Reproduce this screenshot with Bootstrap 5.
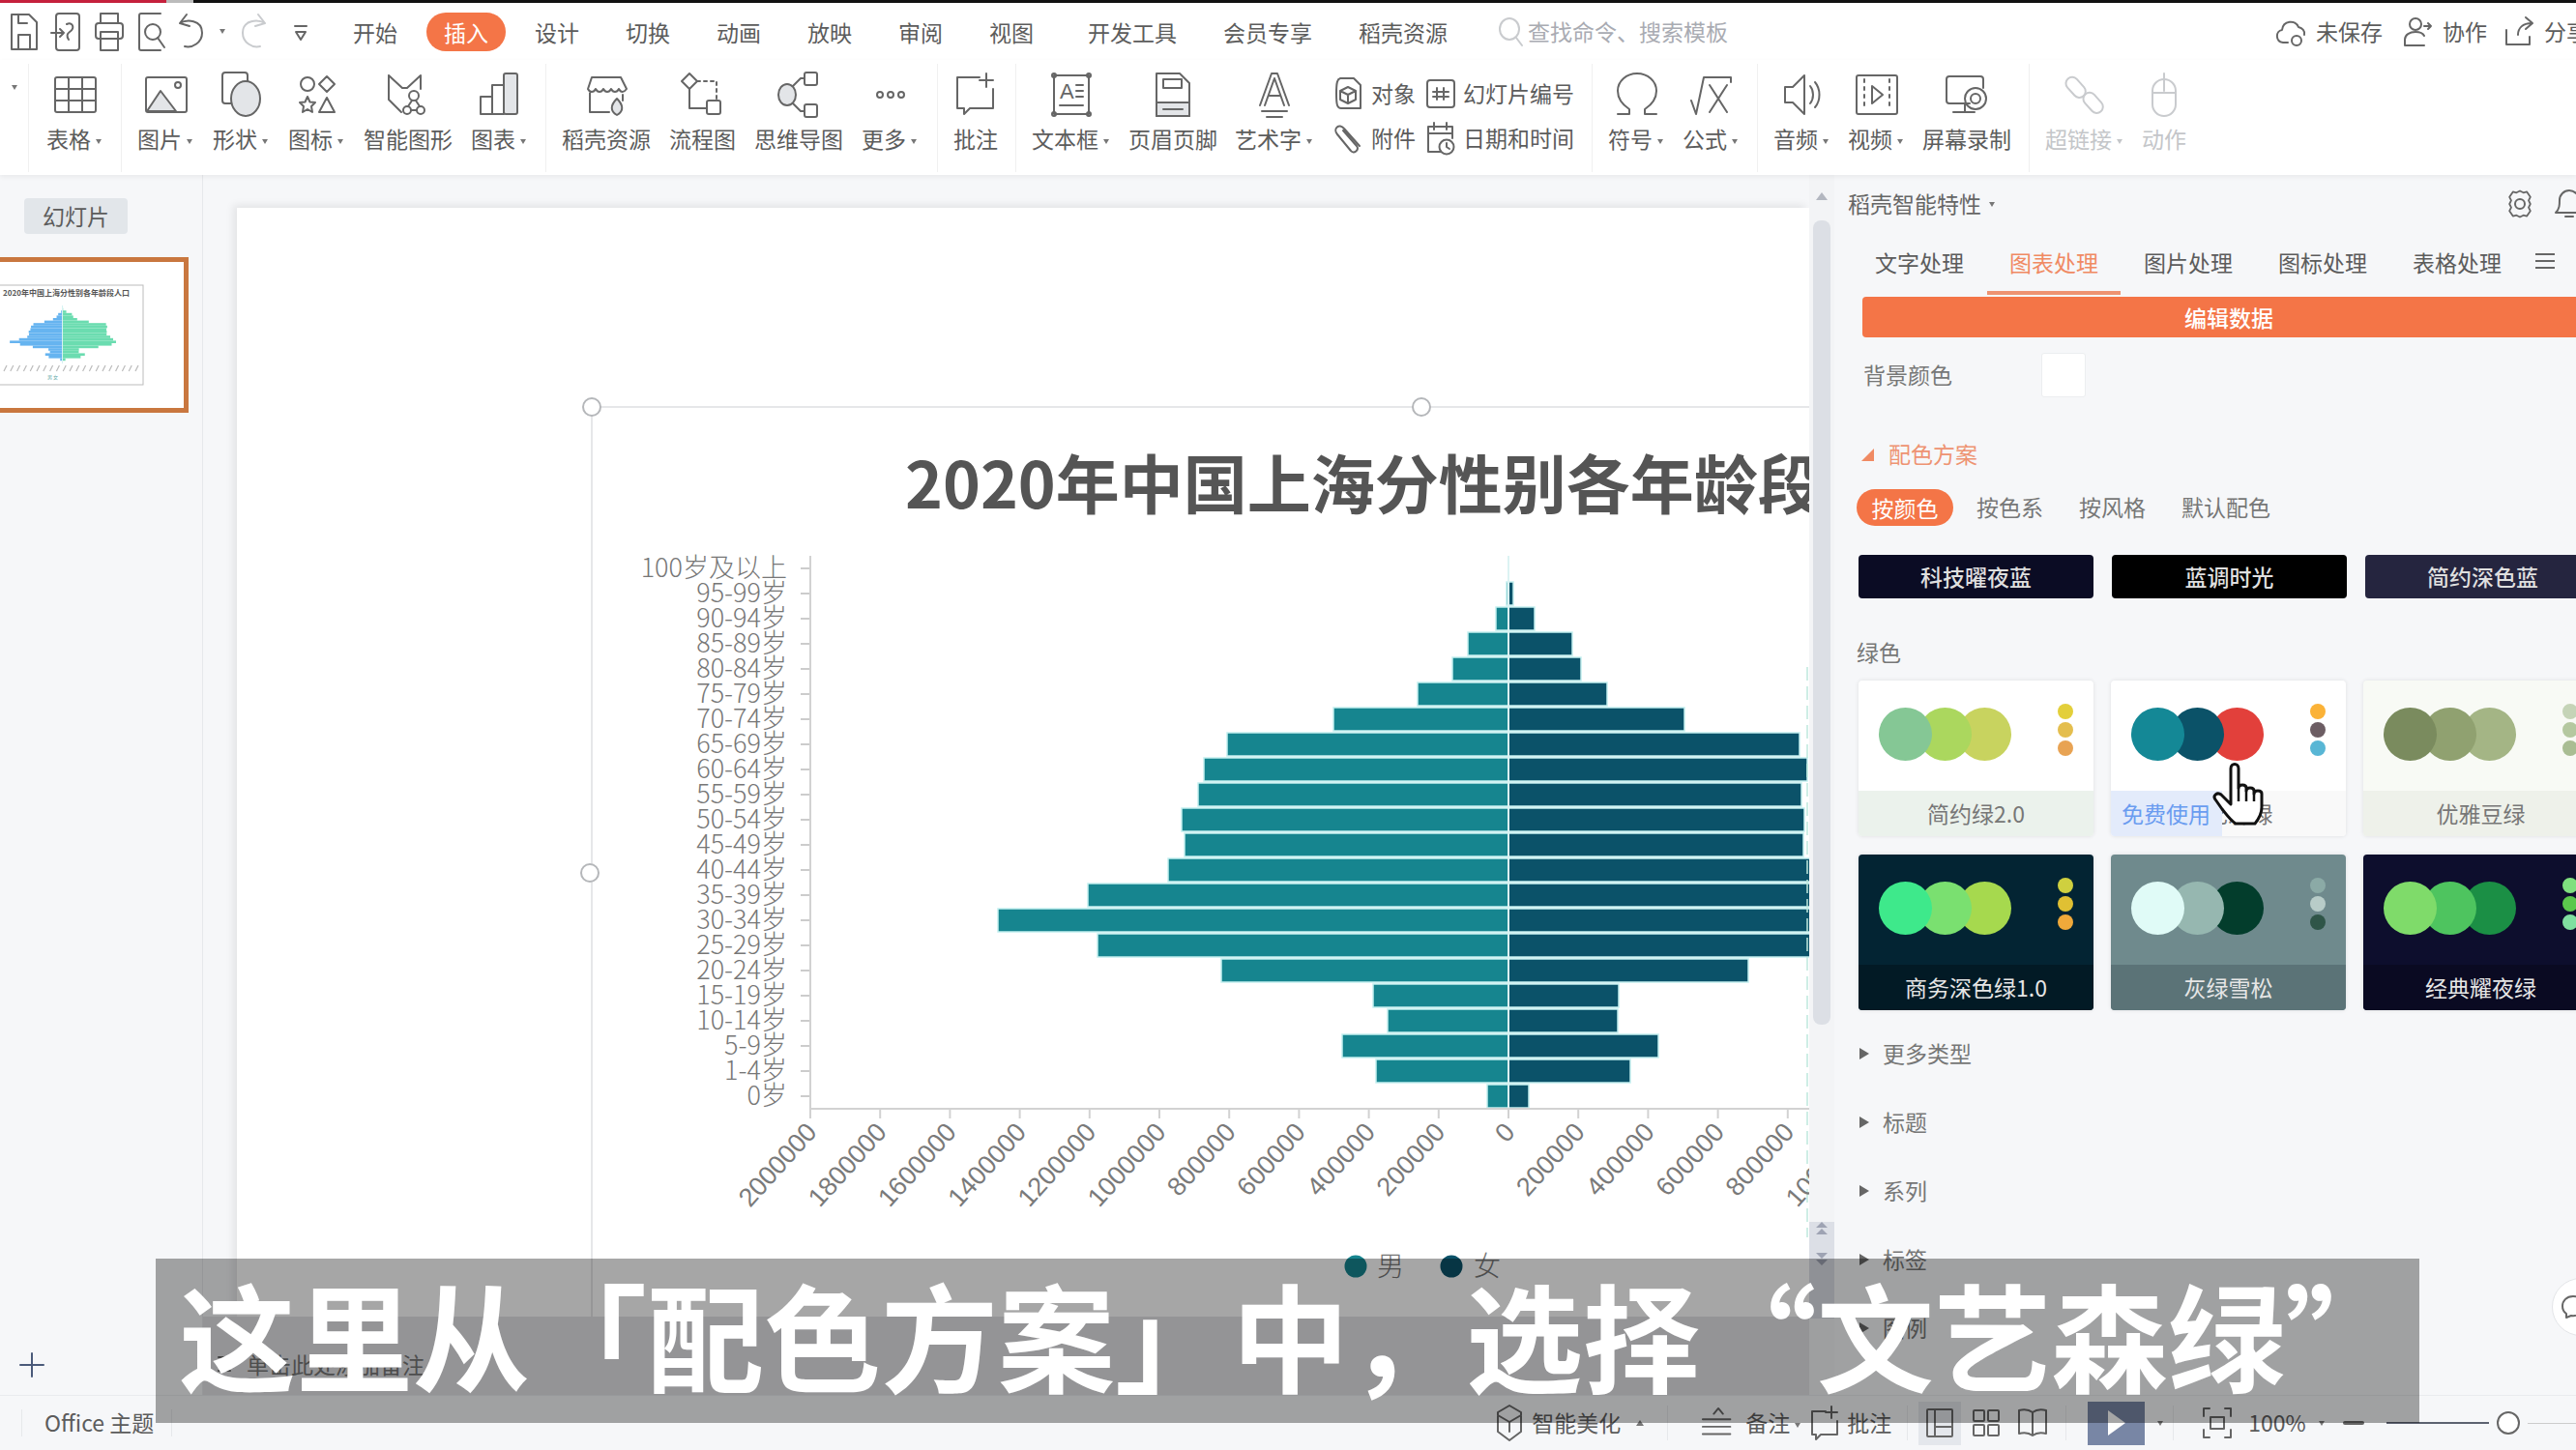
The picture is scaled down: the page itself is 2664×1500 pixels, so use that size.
<!DOCTYPE html>
<html lang="zh-CN">
<head>
  <meta charset="UTF-8" />
  <title>WPS 演示 - 插入图表</title>
  <link href="https://cdn.jsdelivr.net/npm/bootstrap@5.3.0/dist/css/bootstrap.min.css" rel="stylesheet" />
  <style>
    html, body { margin: 0; background: #f6f7f9; }
    body { font-family: "Noto Sans CJK SC", "Noto Sans", sans-serif; color: #5c5c5c; font-size: 23px; line-height: 1.2; }
    .app { width: 2664px; height: 1500px; overflow: hidden; }
    svg { display: block; flex: none; }
    .ic { fill: none; stroke: #666; stroke-width: 2; stroke-linecap: round; stroke-linejoin: round; }
    .ic.pale { stroke: #c9cbce; }
    .ic .gf { fill: #e3e5e8; }
    .ic text { fill: #666; stroke: none; font-family: "Liberation Sans", sans-serif; }

    .strip { height: 3px; background: #111; }
    .strip-red { width: 172px; background: #c5203c; }
    .strip-gap { width: 28px; background: #bbb; }
    .strip-rest { flex: 1; }

    .tabrow { height: 59px; background: #fff; padding-left: 7px; white-space: nowrap; }
    .qat { gap: 8px; }
    .qat-sep { width: 1px; height: 44px; background: #e8e8e8; margin: 0 14px 0 12px; }
    .tiny-crt { display: inline-block; border: 3.5px solid transparent; border-top: 5px solid #777; border-bottom: 0; margin: 0 2px 0 5px; vertical-align: middle; }
    .tiny-up { display: inline-block; border: 4px solid transparent; border-bottom: 6px solid #777; border-top: 0; vertical-align: middle; }
    .rib-tab { padding: 0 18px; height: 40px; line-height: 40px; margin-right: 12px; border-radius: 20px; color: #5c5c5c; }
    .rib-tab.on { background: #f47547; color: #fff; }
    .rib-tab.wide { margin-left: 8px; }
    .find { color: #a9abb2; margin-left: 20px; gap: 3px; }
    .topright { margin-left: 565px; gap: 9px; }
    .topright .gap-save { margin-right: 10px; }
    .topright .gap-team { margin-right: 7px; }

    .ribbon { height: 119px; background: #fff; padding-top: 12px; white-space: nowrap; box-shadow: 0 2px 5px rgba(0,0,0,.06); position: relative; z-index: 2; }
    .rb-lead { width: 29px; text-align: center; }
    .rb-sep { width: 1px; height: 112px; margin: -8px 16px 0 18px; background: #f0f0f0; }
    .rb-sep.first { margin: -8px 18px 0 0; }
    .rb-sep.wide { margin-left: 19px; }
    .rb-group { gap: 18px; }
    .rb-group.roomy { gap: 19px; }
    .rb-item { min-width: 46px; text-align: center; }
    .rb-lab { margin-top: 7px; height: 28px; line-height: 28px; }
    .rb-item.off .rb-lab { color: #c4c6c9; }
    .rb-item.off .tiny-crt { border-top-color: #c4c6c9; }
    .rb-col-a { margin-left: 21px; }
    .rb-col-b { margin-left: 11px; }
    .rb-mini { height: 46px; gap: 8px; }

    .workarea { height: 1262px; }
    .thumbs { width: 210px; border-right: 1px solid #e6e8eb; }
    .thumb-tag { width: 107px; height: 37px; line-height: 37px; margin: 24px 0 24px 25px; background: #e2e6ea; border-radius: 4px; text-align: center; }
    .thumb-box { width: 195px; height: 161px; border: 5px solid #c9773f; border-left: 0; background: #fff; }
    .thumb-add { margin: auto 0 18px 20px; }

    .canvas-col { width: 1661px; }
    .stage { padding: 34px 0 0 35px; height: 1181px; }
    .slide { height: 1147px; background: #fff; box-shadow: -4px -3px 8px rgba(0,0,0,.08); overflow: hidden; }
    .chart { margin: 195px 0 0 355px; }
    .notes { height: 81px; background: #e3e4e7; padding: 36px 0 0 13px; gap: 8px; color: #777; }

    .vscroll { width: 26px; background: #f3f4f6; }
    .v-arrow { height: 47px; padding-top: 18px; }
    .v-thumb { width: 18px; height: 832px; background: #dcdfe5; border-radius: 8px; margin: 0 auto 204px; }
    .v-low { gap: 18px; height: 100px; background: #dcdfe6; padding-top: 0; }

    .panel { width: 767px; overflow: hidden; }
    .panel-in { width: 800px; }
    .p-head { height: 60px; padding-left: 14px; gap: 8px; color: #666; }
    .p-head .gear { margin-left: 518px; }
    .p-head .bell { margin-left: 9px; }
    .smart-tabs { height: 64px; padding: 9px 0 0 19px; gap: 1px; }
    .smart-tabs span { width: 138px; height: 55px; padding-top: 8px; text-align: center; }
    .smart-tabs .on { color: #f08a63; border-bottom: 4px solid #ee9372; }
    .smart-tabs svg { margin: 10px 0 0 11px; }
    .btn-data { width: 758px; height: 42px; margin: 2px 0 0 29px; padding: 0; background: #f47547; color: #fff; border: 0; border-radius: 4px; font-size: 23px; font-weight: 500; }
    .bg-pick { margin: 16px 0 0 30px; height: 46px; }
    .bg-pick span { width: 184px; color: #777; }
    .swatch { width: 46px; height: 46px; background: #fff; border: 1px solid #eceef0; border-radius: 3px; }
    .sec-title { margin: 44px 0 0 28px; height: 30px; gap: 15px; color: #ee9372; }
    .sec-title i { width: 0; height: 0; border-bottom: 13px solid #f08a63; border-left: 13px solid transparent; }
    .pills { margin: 21px 0 0 23px; height: 38px; }
    .pills span { margin-right: 37px; color: #777; }
    .pills .pill-on { width: 100px; line-height: 38px; margin-right: 24px; background: #f47547; color: #fff; border-radius: 19px; text-align: center; }
    .dark-row { margin: 30px 0 0 25px; gap: 19px; }
    .dark-row span { width: 243px; height: 45px; line-height: 45px; text-align: center; border-radius: 4px; color: #dfdfdf; font-weight: 500; }
    .dk-1 { background: #0b0c24; } .dk-2 { background: #000; } .dk-3 { background: #25253f; }
    .sub-title { margin: 40px 0 15px 23px; height: 30px; line-height: 30px; color: #777; }
    .pal-row { margin: 0 0 19px 25px; gap: 18px; }
    .pal { width: 243px; height: 161px; flex: none; border: 0; border-radius: 4px; overflow: hidden; background: var(--bg); box-shadow: 0 0 4px rgba(0,0,0,.10); }
    .pal-top { height: 114px; padding: 28px 0 0 21px; }
    .pal-c { width: 55px; height: 55px; border-radius: 50%; margin-right: -14px; position: relative; }
    .pal-c.a { background: var(--c1); z-index: 3; } .pal-c.b { background: var(--c2); z-index: 2; } .pal-c.c { background: var(--c3); z-index: 1; }
    .pal-d { margin: -4px 0 0 62px; gap: 3px; }
    .pal-d i { width: 16px; height: 16px; border-radius: 50%; }
    .pal-d .a { background: var(--d1); } .pal-d .b { background: var(--d2); } .pal-d .c { background: var(--d3); }
    .pal-ft { height: 47px; line-height: 47px; text-align: center; background: var(--ft); color: var(--tx); position: relative; }
    .free { position: absolute; left: 0; top: 0; width: 115px; height: 47px; padding-left: 11px; text-align: left; background: #e3ebfb; color: #6a9cf0; }
    .pal-1 { --bg:#fff; --ft:#ebf2ec; --tx:#777; --c1:#85c795; --c2:#abd75e; --c3:#c8d35f; --d1:#e3cf3a; --d2:#e4be4e; --d3:#e8a353; }
    .pal-2 { --bg:#fff; --ft:#f9f9f9; --tx:#777; --c1:#148896; --c2:#0b5268; --c3:#e2403b; --d1:#fbb237; --d2:#6c5d63; --d3:#58b6d5; }
    .pal-3 { --bg:#f8faf5; --ft:#eef1ea; --tx:#777; --c1:#7a8b5e; --c2:#90a170; --c3:#a4b585; --d1:#c5d4b7; --d2:#b5c8a0; --d3:#a9bd93; }
    .pal-4 { --bg:#032433; --ft:#021a25; --tx:#e6e6e6; --c1:#3ee98b; --c2:#7ae070; --c3:#a6d94e; --d1:#cfd03f; --d2:#e0c033; --d3:#f0a93a; }
    .pal-5 { --bg:#6f8a8d; --ft:#5b7377; --tx:#e6e6e6; --c1:#e0fbf7; --c2:#96b7b0; --c3:#033d2c; --d1:#8baaa6; --d2:#b8ccc8; --d3:#2f5548; }
    .pal-6 { --bg:#0d0e2d; --ft:#0a0a22; --tx:#e6e6e6; --c1:#7fdb6a; --c2:#4ec45f; --c3:#1b8f45; --d1:#7fe07f; --d2:#5cc84d; --d3:#80e0a0; }
    .acc-list { margin-top: -10px; }
    .acc-row { height: 71px; padding-left: 26px; gap: 14px; color: #777; }
    .acc-row i { width: 0; height: 0; border-left: 10px solid #666; border-top: 6px solid transparent; border-bottom: 6px solid transparent; }

    .statusbar { height: 57px; border-top: 1px solid #e9ebee; background: #f6f7f9; white-space: nowrap; }
    .st-sep { width: 1px; height: 36px; background: #e6e8eb; }
    .st-theme { margin: 0 0 0 22px; padding: 0 18px 0 23px; width: 161px; border-left: 1px solid #e6e8eb; border-right: 1px solid #e6e8eb; }
    .st-mid { margin-left: 1368px; gap: 8px; }
    .st-gap-a { margin-right: 26px; }
    .st-gap-b { margin-right: 3px; }
    .st-gap-c { margin-right: 14px; }
    .st-fit { margin-left: 21px; }
    .st-view { width: 44px; height: 45px; }
    .st-view.on { background: #e4e7ec; }
    .st-play { width: 59px; height: 45px; background: #7886a5; }
    .st-slide { width: 106px; height: 2px; background: #5c6270; margin-left: 6px; }
    .st-knob { width: 24px; height: 24px; border-radius: 50%; background: #fff; border: 2px solid #666; }
    .st-rest { width: 60px; height: 1px; background: #ccc; }

    .subtitle-bar { left: 161px; top: 1302px; width: 2341px; height: 170px; padding: 0 0 18px 24px; background: rgba(0,0,0,.35); color: #fff; font-size: 121px; line-height: 1; font-weight: 700; white-space: nowrap; z-index: 5; }
    .hand { left: 2288px; top: 788px; z-index: 4; }
    .chat-btn { left: 2639px; top: 1322px; width: 60px; height: 60px; background: #fff; border: 1px solid #e3e5e8; border-radius: 50%; z-index: 3; padding: 16px 0 0 8px; }
  </style>
</head>
<body>
<div class="app position-relative">
  <div class="d-flex">
    <div class="strip strip-red"></div>
    <div class="strip strip-gap"></div>
    <div class="strip strip-rest"></div>
  </div>

  <div class="tabrow d-flex align-items-center">
    <div class="qat d-flex align-items-center">
      <svg class="ic" width="36" height="44" viewBox="0 0 36 44"><path d="M5 4h18l8 8v28H5z"/><path d="M12 40V25h12v15M12 4v9h9"/></svg>
      <svg class="ic" width="36" height="44" viewBox="0 0 36 44"><rect x="7" y="3" width="24" height="38" rx="3"/><path d="M2 23h13l-4-4m4 4-4 4M18 14c6-3 9 4 3 8-3 2-3 5-1 8"/></svg>
      <svg class="ic" width="36" height="44" viewBox="0 0 36 44"><path d="M9 13V3h18v10"/><rect x="4" y="13" width="28" height="16" rx="3"/><path d="M9 22v19h18V22z"/></svg>
      <svg class="ic" width="36" height="44" viewBox="0 0 36 44"><path d="M27 3H7a2 2 0 0 0-2 2v34a2 2 0 0 0 2 2h20"/><circle cx="19" cy="22" r="8"/><path d="m24 28 7 10"/></svg>
      <svg class="ic" width="36" height="44" viewBox="0 0 36 44"><path d="m10 4-7 9 10 3M3 13c7-4 23-4 23 10 0 10-10 16-18 14"/></svg>
      <span class="tiny-crt m-0"></span>
      <svg class="ic pale" width="36" height="44" viewBox="0 0 36 44"><path d="m26 4 7 9-10 3M33 13c-7-4-23-4-23 10 0 10 10 16 18 14"/></svg>
      <svg class="ic ms-3" width="20" height="44" viewBox="0 0 20 44"><path d="M4 16h12M5 22h10l-5 8z"/></svg>
    </div>
    <div class="qat-sep"></div>
    <span class="rib-tab">开始</span>
    <span class="rib-tab on">插入</span>
    <span class="rib-tab">设计</span>
    <span class="rib-tab">切换</span>
    <span class="rib-tab">动画</span>
    <span class="rib-tab">放映</span>
    <span class="rib-tab">审阅</span>
    <span class="rib-tab">视图</span>
    <span class="rib-tab wide">开发工具</span>
    <span class="rib-tab">会员专享</span>
    <span class="rib-tab">稻壳资源</span>
    <div class="find d-flex align-items-center">
      <svg class="ic pale" width="30" height="34" viewBox="0 0 30 34"><ellipse cx="14" cy="14" rx="10" ry="11"/><path d="m21 23 6 8"/></svg>
      查找命令、搜索模板
    </div>
    <div class="topright d-flex align-items-center">
      <svg class="ic" width="34" height="34" viewBox="0 0 34 34"><path d="M14 28H9C1 27 1 16 8 15 9 5 22 4 25 12c4 1 7 4 6 8"/><circle cx="23" cy="26" r="5"/></svg>
      <span class="gap-save">未保存</span>
      <svg class="ic" width="34" height="34" viewBox="0 0 34 34"><circle cx="15" cy="9" r="6"/><path d="M4 31v-6c0-5 5-8 11-8s8 2 9 4M4 31h20M24 11h7m-3-3 3 3-3 3"/></svg>
      <span class="gap-team">协作</span>
      <svg class="ic" width="34" height="34" viewBox="0 0 34 34"><path d="M4 15v15h24v-8M16 20c0-7 5-12 14-12M24 2l7 6-7 6"/></svg>
      <span>分享</span>
    </div>
  </div>

  <div class="ribbon d-flex">
    <div class="rb-lead"><span class="tiny-crt m-0"></span></div>
    <div class="rb-sep first"></div>
    <div class="rb-item">
      <svg class="ic mx-auto" width="46" height="48" viewBox="0 0 46 48"><rect x="2" y="6" width="42" height="36" rx="2"/><path d="M16 6v36M30 6v36M2 18h42M2 30h42"/></svg>
      <div class="rb-lab">表格<span class="tiny-crt"></span></div>
    </div>
    <div class="rb-sep"></div>
    <div class="rb-group roomy d-flex">
      <div class="rb-item">
        <svg class="ic mx-auto" width="46" height="48" viewBox="0 0 46 48"><rect x="2" y="6" width="42" height="36" rx="2"/><path class="gf" d="M3 41 17 20l16 21z"/><circle cx="35" cy="14" r="3"/></svg>
        <div class="rb-lab">图片<span class="tiny-crt"></span></div>
      </div>
      <div class="rb-item">
        <svg class="ic mx-auto" width="46" height="48" viewBox="0 0 46 48"><rect x="3" y="1" width="26" height="32" rx="3"/><ellipse class="gf" cx="27" cy="28" rx="15" ry="18"/></svg>
        <div class="rb-lab">形状<span class="tiny-crt"></span></div>
      </div>
      <div class="rb-item">
        <svg class="ic mx-auto" width="46" height="48" viewBox="0 0 46 48"><circle cx="13" cy="13" r="7"/><path d="m33 5 8 8-8 8-8-8zM13 26l2.5 5.500 5.500.5-4 4 1 6-5-3-5 3 1-6-4-4 5.500-.5zM33 27l8 15H25z"/></svg>
        <div class="rb-lab">图标<span class="tiny-crt"></span></div>
      </div>
      <div class="rb-item">
        <svg class="ic mx-auto" width="46" height="48" viewBox="0 0 46 48"><path d="M3 4v25l13 13M3 4l14 13h5L36 4v14"/><circle cx="29" cy="25" r="5"/><circle cx="22" cy="40" r="4"/><circle cx="36" cy="40" r="4"/><path d="m27 30-4 6m8-6 4 6m-9 4h6"/></svg>
        <div class="rb-lab">智能图形</div>
      </div>
      <div class="rb-item">
        <svg class="ic mx-auto" width="46" height="48" viewBox="0 0 46 48"><rect x="3" y="26" width="12" height="18"/><rect x="15" y="14" width="12" height="30"/><rect class="gf" x="27" y="2" width="14" height="42" rx="2"/></svg>
        <div class="rb-lab">图表<span class="tiny-crt"></span></div>
      </div>
    </div>
    <div class="rb-sep"></div>
    <div class="rb-group roomy d-flex">
      <div class="rb-item">
        <svg class="ic mx-auto" width="46" height="48" viewBox="0 0 46 48"><path d="M8 6h30l6 12c-3 4-6 4-8 0-2 4-6 4-8 0-2 4-6 4-8 0-2 4-6 4-8 0-2 4-6 4-8 0zM6 22v20h20M40 24v6"/><path class="gf" d="M34 45c-7-4-7-10 0-17 7 7 7 13 0 17z"/></svg>
        <div class="rb-lab">稻壳资源</div>
      </div>
      <div class="rb-item">
        <svg class="ic mx-auto" width="46" height="48" viewBox="0 0 46 48"><path d="m9 2 8 8-8 8-8-8zM9 18v20h18"/><path stroke-dasharray="3 4" d="M17 10h20v20"/><rect x="27" y="30" width="14" height="14" rx="2"/></svg>
        <div class="rb-lab">流程图</div>
      </div>
      <div class="rb-item">
        <svg class="ic mx-auto" width="46" height="48" viewBox="0 0 46 48"><ellipse class="gf" cx="11" cy="24" rx="9" ry="11"/><path d="m17 15 8-8h4M17 33l8 8h4"/><rect x="29" y="1" width="13" height="13" rx="2"/><rect x="29" y="34" width="13" height="13" rx="2"/></svg>
        <div class="rb-lab">思维导图</div>
      </div>
      <div class="rb-item">
        <svg class="ic mx-auto" width="46" height="48" viewBox="0 0 46 48"><circle cx="12" cy="24" r="3"/><circle cx="23" cy="24" r="3"/><circle cx="34" cy="24" r="3"/></svg>
        <div class="rb-lab">更多<span class="tiny-crt"></span></div>
      </div>
    </div>
    <div class="rb-sep wide"></div>
    <div class="rb-item">
      <svg class="ic mx-auto" width="46" height="48" viewBox="0 0 46 48"><path d="M27 6H4v32h7v6l6-6h24V18M34 2v14M27 9h14"/></svg>
      <div class="rb-lab">批注</div>
    </div>
    <div class="rb-sep"></div>
    <div class="rb-group d-flex">
      <div class="rb-item">
        <svg class="ic mx-auto" width="46" height="48" viewBox="0 0 46 48"><rect x="5" y="4" width="36" height="40"/><circle cx="5" cy="4" r="2"/><circle cx="41" cy="4" r="2"/><circle cx="5" cy="44" r="2"/><circle cx="41" cy="44" r="2"/><text x="11" y="28" font-size="22">A</text><path d="M28 14h7M28 20h7M28 26h7M11 35h24"/></svg>
        <div class="rb-lab">文本框<span class="tiny-crt"></span></div>
      </div>
      <div class="rb-item">
        <svg class="ic mx-auto" width="46" height="48" viewBox="0 0 46 48"><path d="M6 2h24l10 10v34H6z"/><rect x="13" y="8" width="19" height="9"/><path class="gf" d="M6 32h34v14H6z"/><path d="M13 39h20"/></svg>
        <div class="rb-lab">页眉页脚</div>
      </div>
      <div class="rb-item">
        <svg class="ic mx-auto" width="46" height="48" viewBox="0 0 46 48"><path d="M8 35 20 2h6l12 33M13 35l10-28 10 28M17 25h12M10 41h26M15 47h16"/></svg>
        <div class="rb-lab">艺术字<span class="tiny-crt"></span></div>
      </div>
    </div>
    <div class="rb-col-a">
      <div class="rb-mini d-flex align-items-center">
        <svg class="ic" width="30" height="36" viewBox="0 0 30 36"><path d="M6 2h14l7 7v24H7M6 2C3 3 2 6 2 18s1 15 5 15"/><path d="m14 11 8 4v9l-8 4-8-4v-9zM6 15l8 4 8-4M14 19v9"/></svg>
        <span>对象</span>
      </div>
      <div class="rb-mini d-flex align-items-center">
        <svg class="ic" width="30" height="36" viewBox="0 0 30 36"><path d="M26 26 10 8C5 2-2 8 3 14l14 17c3 4 9-1 6-5L9 10"/></svg>
        <span>附件</span>
      </div>
    </div>
    <div class="rb-col-b">
      <div class="rb-mini d-flex align-items-center">
        <svg class="ic" width="30" height="36" viewBox="0 0 30 36"><rect x="1" y="4" width="28" height="28" rx="3"/><path d="M11 12v12M18 12v12M7 16h16M7 21h16"/></svg>
        <span>幻灯片编号</span>
      </div>
      <div class="rb-mini d-flex align-items-center">
        <svg class="ic" width="30" height="36" viewBox="0 0 30 36"><path d="M15 32H2V6h25v12M2 13h25M8 2v7M21 2v7"/><circle cx="21" cy="27" r="7.500"/><path d="M21 23v4l3 2"/></svg>
        <span>日期和时间</span>
      </div>
    </div>
    <div class="rb-sep"></div>
    <div class="rb-group d-flex">
      <div class="rb-item">
        <svg class="ic mx-auto" width="46" height="48" viewBox="0 0 46 48"><path d="M3 44h12v-5C6 33 3 26 3 20a20 18 0 0 1 40 0c0 6-3 13-12 19v5h12"/></svg>
        <div class="rb-lab">符号<span class="tiny-crt"></span></div>
      </div>
      <div class="rb-item">
        <svg class="ic mx-auto" width="46" height="48" viewBox="0 0 46 48"><path d="m2 30 5 14 8-38h28v5M21 14l18 28M39 14 21 42"/></svg>
        <div class="rb-lab">公式<span class="tiny-crt"></span></div>
      </div>
    </div>
    <div class="rb-sep"></div>
    <div class="rb-group d-flex">
      <div class="rb-item">
        <svg class="ic mx-auto" width="46" height="48" viewBox="0 0 46 48"><path d="M5 16h8L25 4v40L13 32H5zM31 15c4 5 4 13 0 18M36 11c6 7 6 19 0 26"/></svg>
        <div class="rb-lab">音频<span class="tiny-crt"></span></div>
      </div>
      <div class="rb-item">
        <svg class="ic mx-auto" width="46" height="48" viewBox="0 0 46 48"><rect x="2" y="4" width="42" height="40" rx="2"/><path stroke-dasharray="3 5" d="M10 8v32M36 8v32"/><path d="m18 15 11 9-11 9z"/></svg>
        <div class="rb-lab">视频<span class="tiny-crt"></span></div>
      </div>
      <div class="rb-item">
        <svg class="ic mx-auto" width="46" height="48" viewBox="0 0 46 48"><path d="M26 33H5a3 3 0 0 1-3-3V8a3 3 0 0 1 3-3h32a3 3 0 0 1 3 3v9M21 33v9M9 42h22"/><circle cx="32" cy="28" r="11"/><circle cx="32" cy="28" r="5"/></svg>
        <div class="rb-lab">屏幕录制</div>
      </div>
    </div>
    <div class="rb-sep"></div>
    <div class="rb-group d-flex">
      <div class="rb-item off">
        <svg class="ic pale mx-auto" width="46" height="48" viewBox="0 0 46 48"><rect x="2" y="10" width="24" height="13" rx="6.500" transform="rotate(48 14 16)"/><rect x="20" y="26" width="24" height="13" rx="6.500" transform="rotate(48 32 32)"/></svg>
        <div class="rb-lab">超链接<span class="tiny-crt"></span></div>
      </div>
      <div class="rb-item off">
        <svg class="ic pale mx-auto" width="46" height="48" viewBox="0 0 46 48"><rect x="11" y="8" width="24" height="38" rx="12"/><path d="M23 2v18M11 22h24"/></svg>
        <div class="rb-lab">动作</div>
      </div>
    </div>
  </div>

  <div class="workarea d-flex">
    <div class="thumbs d-flex flex-column">
      <div class="thumb-tag">幻灯片</div>
      <div class="thumb-box"><svg id="thumbChart" width="190" height="151" viewBox="0 271 190 151"></svg></div>
      <div class="thumb-add">
        <svg class="ic" width="26" height="26" viewBox="0 0 26 26"><path stroke="#4a5a7a" d="M13 1v24M1 13h24"/></svg>
      </div>
    </div>

    <div class="canvas-col d-flex flex-column">
      <div class="stage">
        <div class="slide">
          <svg id="popChart" class="chart" width="1271" height="952" viewBox="600 410 1271 952"></svg>
        </div>
      </div>
      <div class="notes d-flex align-items-start">
        <svg class="ic" width="24" height="28" viewBox="0 0 24 28"><path d="M3 6h18M3 13h18M3 20h12"/></svg>
        单击此处添加备注
      </div>
    </div>

    <div class="vscroll">
      <div class="v-arrow"><svg width="26" height="10" viewBox="0 0 26 10"><path d="m13 0 6 8H7z" fill="#b3b7c0"/></svg></div>
      <div class="v-thumb"></div>
      <div class="v-low d-flex flex-column align-items-center">
        <svg width="26" height="14" viewBox="0 0 26 14"><path d="m13 0 6 6H7zM13 7l6 6H7z" fill="#9ea3b3"/></svg>
        <svg width="26" height="14" viewBox="0 0 26 14"><path d="m7 0h12l-6 6zM7 7h12l-6 6z" fill="#9ea3b3"/></svg>
      </div>
    </div>

    <div class="panel">
      <div class="panel-in">
        <div class="p-head d-flex align-items-center">
          <span>稻壳智能特性</span><span class="tiny-crt m-0"></span>
          <svg class="ic gear" width="34" height="34" viewBox="0 0 34 34"><path d="m17 2 4 2 4-1 4 6-2 4 2 4-2 4 2 4-4 6-4-1-4 2-4-2-4 1-4-6 2-4-2-4 2-4-2-4 4-6 4 1z" transform="matrix(.9 0 0 .9 1.700 1.700)"/><circle cx="17" cy="17" r="5"/></svg>
          <svg class="ic bell" width="34" height="34" viewBox="0 0 34 34"><path d="M3 26c4-4 4-8 4-13a10 10 0 0 1 20 0c0 5 0 9 4 13zM13 30h8"/></svg>
        </div>
        <div class="smart-tabs d-flex">
          <span>文字处理</span>
          <span class="on">图表处理</span>
          <span>图片处理</span>
          <span>图标处理</span>
          <span>表格处理</span>
          <svg class="ic" width="20" height="20" viewBox="0 0 20 20"><path d="M0 3h20M0 10h20M0 17h20"/></svg>
        </div>
        <button type="button" class="btn btn-data">编辑数据</button>
        <div class="bg-pick d-flex align-items-center">
          <span>背景颜色</span>
          <div class="swatch"></div>
        </div>
        <div class="sec-title d-flex align-items-center"><i></i>配色方案</div>
        <div class="pills d-flex align-items-center">
          <span class="pill-on">按颜色</span>
          <span>按色系</span>
          <span>按风格</span>
          <span>默认配色</span>
        </div>
        <div class="dark-row d-flex">
          <span class="dk-1">科技曜夜蓝</span>
          <span class="dk-2">蓝调时光</span>
          <span class="dk-3">简约深色蓝</span>
        </div>
        <div class="sub-title">绿色</div>
        <div class="pal-row d-flex">
          <div class="card pal pal-1">
            <div class="pal-top d-flex"><div class="pal-c a"></div><div class="pal-c b"></div><div class="pal-c c"></div><div class="pal-d d-flex flex-column"><i class="a"></i><i class="b"></i><i class="c"></i></div></div>
            <div class="pal-ft">简约绿2.0</div>
          </div>
          <div class="card pal pal-2">
            <div class="pal-top d-flex"><div class="pal-c a"></div><div class="pal-c b"></div><div class="pal-c c"></div><div class="pal-d d-flex flex-column"><i class="a"></i><i class="b"></i><i class="c"></i></div></div>
            <div class="pal-ft">文艺森绿<span class="free">免费使用</span></div>
          </div>
          <div class="card pal pal-3">
            <div class="pal-top d-flex"><div class="pal-c a"></div><div class="pal-c b"></div><div class="pal-c c"></div><div class="pal-d d-flex flex-column"><i class="a"></i><i class="b"></i><i class="c"></i></div></div>
            <div class="pal-ft">优雅豆绿</div>
          </div>
        </div>
        <div class="pal-row d-flex">
          <div class="card pal pal-4">
            <div class="pal-top d-flex"><div class="pal-c a"></div><div class="pal-c b"></div><div class="pal-c c"></div><div class="pal-d d-flex flex-column"><i class="a"></i><i class="b"></i><i class="c"></i></div></div>
            <div class="pal-ft">商务深色绿1.0</div>
          </div>
          <div class="card pal pal-5">
            <div class="pal-top d-flex"><div class="pal-c a"></div><div class="pal-c b"></div><div class="pal-c c"></div><div class="pal-d d-flex flex-column"><i class="a"></i><i class="b"></i><i class="c"></i></div></div>
            <div class="pal-ft">灰绿雪松</div>
          </div>
          <div class="card pal pal-6">
            <div class="pal-top d-flex"><div class="pal-c a"></div><div class="pal-c b"></div><div class="pal-c c"></div><div class="pal-d d-flex flex-column"><i class="a"></i><i class="b"></i><i class="c"></i></div></div>
            <div class="pal-ft">经典耀夜绿</div>
          </div>
        </div>
        <div class="acc-list">
          <div class="acc-row d-flex align-items-center"><i></i>更多类型</div>
          <div class="acc-row d-flex align-items-center"><i></i>标题</div>
          <div class="acc-row d-flex align-items-center"><i></i>系列</div>
          <div class="acc-row d-flex align-items-center"><i></i>标签</div>
          <div class="acc-row d-flex align-items-center"><i></i>图例</div>
        </div>
      </div>
    </div>
  </div>

  <div class="statusbar d-flex align-items-center">
    <div class="st-theme">Office 主题</div>
    <div class="st-mid d-flex align-items-center">
      <svg class="ic" width="30" height="40" viewBox="0 0 30 40"><path d="M15 2 3 9v20l12 9 12-9V9zM3 12l12 7 12-7M15 19v10"/></svg>
      <span>智能美化</span>
      <span class="tiny-up mx-2"></span>
      <div class="st-sep st-gap-a ms-2"></div>
      <svg class="ic" width="38" height="34" viewBox="0 0 38 34"><path d="M2 14h30M2 22h30M2 30h30M14 8l5-6 5 6" transform="scale(.95)"/></svg>
      <span>备注<span class="tiny-crt"></span></span>
      <svg class="ic" width="30" height="36" viewBox="0 0 30 36"><path d="M16 6H2v24h4v5l5-5h17V16M22 1v12M16 7h12"/></svg>
      <span>批注</span>
      <div class="st-sep st-gap-b ms-2"></div>
      <div class="st-view on d-flex align-items-center justify-content-center"><svg class="ic" width="30" height="32" viewBox="0 0 30 32"><rect x="2" y="2" width="26" height="28" rx="1"/><path d="M10 2v28M10 20h18"/></svg></div>
      <svg class="ic" width="36" height="32" viewBox="0 0 36 32"><rect x="5" y="3" width="11" height="11" rx="1"/><rect x="20" y="3" width="11" height="11" rx="1"/><rect x="5" y="18" width="11" height="11" rx="1"/><rect x="20" y="18" width="11" height="11" rx="1"/></svg>
      <svg class="ic ms-1" width="36" height="34" viewBox="0 0 36 34"><path d="M18 6C14 3 8 3 4 4v24c4-1 10-1 14 2 4-3 10-3 14-2V4c-4-1-10-1-14 2zM18 6v24"/></svg>
      <div class="st-sep st-gap-c ms-2"></div>
      <div class="st-play d-flex align-items-center justify-content-center"><svg width="22" height="30" viewBox="0 0 22 30"><path d="M2 2 20 15 2 28z" fill="#fff"/></svg></div>
      <span class="tiny-crt"></span>
      <div class="st-sep"></div>
      <svg class="ic st-fit" width="32" height="34" viewBox="0 0 32 34"><path d="M8 2H2v8M24 2h6v8M8 32H2v-8M24 32h6v-8"/><rect x="9" y="11" width="14" height="12"/></svg>
      <span class="ms-2">100%</span>
      <span class="tiny-crt"></span>
      <svg class="ic mx-2" width="24" height="6" viewBox="0 0 24 6"><path stroke-width="4" d="M3 3h18"/></svg>
      <div class="st-slide"></div>
      <div class="st-knob"></div>
      <div class="st-rest"></div>
    </div>
  </div>

  <svg class="hand position-absolute" width="56" height="68" viewBox="0 0 56 68">
    <path fill="#fff" stroke="#111" stroke-width="3" stroke-linejoin="round" d="M19 7c0-6 8-6 8 0v20c0-4 8-4 8 0v3c0-4 8-4 8 0v3c0-4 8-4 8 0v14c0 7-3 12-7 17H24c-5-3-10-10-14-15L3 39c-3-4 2-8 6-5l10 10z"/>
    <path stroke="#111" stroke-width="2.500" d="M27 27v14M35 30v11M43 33v8"/>
  </svg>
  <div class="chat-btn position-absolute">
    <svg class="ic" width="26" height="26" viewBox="0 0 26 26"><path d="M13 2C6 2 2 7 2 12c0 3 1 6 4 8v4l5-2c8 1 13-4 13-10S19 2 13 2z"/></svg>
  </div>
  <div class="subtitle-bar position-absolute d-flex align-items-center">这里从「配色方案」中，选择“文艺森绿”</div>
</div>

<script src="https://cdn.jsdelivr.net/npm/bootstrap@5.3.0/dist/js/bootstrap.bundle.min.js"></script>
<script>
  (function () {
    // bar widths read off the picture: [label, male px, female px]
    var rows = [
      ["100岁及以上", 0, 0], ["95-99岁", 2, 5], ["90-94岁", 13, 27], ["85-89岁", 42, 66],
      ["80-84岁", 58, 75], ["75-79岁", 94, 102], ["70-74岁", 181, 182], ["65-69岁", 291, 301],
      ["60-64岁", 315, 309], ["55-59岁", 321, 303], ["50-54岁", 338, 306], ["45-49岁", 335, 305],
      ["40-44岁", 352, 330], ["35-39岁", 435, 350], ["30-34岁", 528, 370], ["25-29岁", 425, 340],
      ["20-24岁", 297, 248], ["15-19岁", 140, 114], ["10-14岁", 125, 113], ["5-9岁", 172, 155],
      ["1-4岁", 137, 126], ["0岁", 22, 21]
    ];
    var zeroX = 1560, chartTop = 575, band = 26, step = 72.2;
    var h = "";
    // selection frame
    h += '<path d="M612 421H1871M612 421V1362" stroke="#e6e7e9" stroke-width="2" fill="none"/>';
    [[612, 421], [1470, 421], [610, 903]].forEach(function (p) {
      h += '<circle cx="' + p[0] + '" cy="' + p[1] + '" r="9" fill="#fff" stroke="#b5b7ba" stroke-width="2"/>';
    });
    h += '<text x="936" y="526" font-size="66" font-weight="700" fill="#555" font-family="Noto Sans CJK SC, sans-serif">2020年中国上海分性别各年龄段人口金字塔</text>';
    rows.forEach(function (r, i) {
      var y = chartTop + i * band;
      h += '<text x="814" y="' + (y + 22) + '" text-anchor="end" font-size="27" font-weight="300" fill="#777" font-family="Noto Sans CJK SC, sans-serif">' + r[0] + '</text>';
      h += '<path d="M828 ' + (y + 13) + 'h10" stroke="#ccc" stroke-width="2"/>';
      if (r[1]) h += '<rect x="' + (zeroX - r[1]) + '" y="' + (y + 1) + '" width="' + r[1] + '" height="24" fill="#16858f" stroke="#c4efef" stroke-width="1.5"/>';
      if (r[2]) h += '<rect x="' + zeroX + '" y="' + (y + 1) + '" width="' + r[2] + '" height="24" fill="#0b5269" stroke="#c4efef" stroke-width="1.5"/>';
    });
    h += '<path d="M' + zeroX + ' 575V1147" stroke="#dcf3f3" stroke-width="2"/>';
    h += '<path d="M838 575V1147H1871" stroke="#d2d2d2" stroke-width="2" fill="none"/>';
    h += '<path d="M1869 690V1280" stroke="#bfe9dd" stroke-width="1.5" stroke-dasharray="14 6"/>';
    for (var k = -10; k <= 5; k++) {
      var x = zeroX + k * step;
      h += '<path d="M' + x + ' 1147v10" stroke="#d2d2d2" stroke-width="2"/>';
      h += '<text text-anchor="end" font-size="27" fill="#7a7a7a" font-family="Liberation Sans, sans-serif" transform="translate(' + (x + 8) + ' 1172) rotate(-48)">' + Math.abs(k * 200000) + '</text>';
    }
    h += '<circle cx="1402" cy="1310" r="11.5" fill="#16858f"/><text x="1424" y="1320" font-size="28" font-weight="300" fill="#777" font-family="Noto Sans CJK SC, sans-serif">男</text>';
    h += '<circle cx="1501" cy="1310" r="11.5" fill="#0b5269"/><text x="1524" y="1320" font-size="28" font-weight="300" fill="#777" font-family="Noto Sans CJK SC, sans-serif">女</text>';
    document.getElementById("popChart").innerHTML = h;

    // small copy of the slide in the left pane
    var t = '<rect x="-2" y="295" width="150" height="103" fill="#fff" stroke="#bbb"/>';
    t += '<text x="3" y="306" font-size="8" font-weight="700" fill="#555" font-family="Noto Sans CJK SC, sans-serif">2020年中国上海分性别各年龄段人口</text>';
    rows.forEach(function (r, i) {
      var y = 316 + i * 2.6;
      t += '<rect x="' + (64.5 - r[1] * 0.103) + '" y="' + y + '" width="' + (r[1] * 0.103) + '" height="2.6" fill="#66b4f0"/>';
      t += '<rect x="64.5" y="' + y + '" width="' + (r[2] * 0.15) + '" height="2.6" fill="#6bdcb0"/>';
    });
    t += '<path d="M64.5 316V376" stroke="#d6f3f3"/>';
    for (var j = 0; j < 21; j++) {
      t += '<path d="M' + (4 + j * 6.8) + ' 384l3-6" stroke="#bbb" stroke-width="1.2"/>';
    }
    t += '<text x="49" y="392" font-size="5" fill="#6aa" font-family="Noto Sans CJK SC, sans-serif">男 女</text>';
    document.getElementById("thumbChart").innerHTML = t;
  })();
</script>
</body>
</html>
